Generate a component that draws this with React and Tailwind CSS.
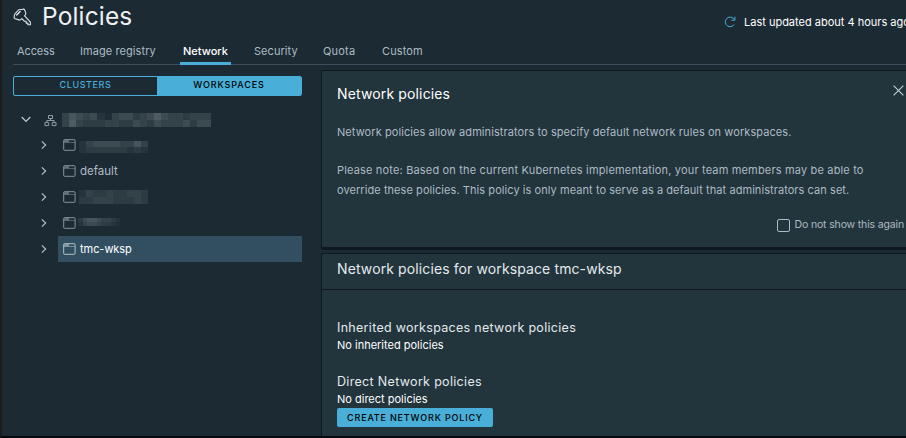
import React from "react";

const TABS = [
  { label: "Access", cls: "w-[37px] tracking-[-0.1px]" },
  { label: "Image registry", cls: "w-[77px] tracking-[0.08px]" },
  { label: "Network", cls: "w-[45px] tracking-[0px]", active: true },
  { label: "Security", cls: "w-[43px] tracking-[0.05px]" },
  { label: "Quota", cls: "w-[33px] tracking-[0.2px]" },
  { label: "Custom", cls: "w-[41px] tracking-[0.1px]" },
];

// Brightness levels of the redacted names, one string per tile row.
const ROOT_TILES = ["354341034423464332333", "363222332243243334244"];
const FIRST_TILES = ["1344443353", "1222222121"];
const SECOND_TILES = ["1322322332", "2233322232"];
const THIRD_TILES = ["245543321", "134432210"];

const LEVELS = [
  "bg-[#1f2d36]",
  "bg-[#26343d]",
  "bg-[#2d3b43]",
  "bg-[#34424a]",
  "bg-[#3d4a52]",
  "bg-[#47555c]",
  "bg-[#4f5b62]",
];

function Redacted({ tiles, size, className = "" }) {
  return (
    <div className={`flex flex-col ${className}`}>
      {tiles.map((row, i) => (
        <div key={i} className="flex">
          {row.split("").map((level, j) => (
            <span key={j} className={`block ${size} ${LEVELS[Number(level)]}`} />
          ))}
        </div>
      ))}
    </div>
  );
}

function KeyIcon() {
  return (
    <svg width="19" height="19" viewBox="0 0 19 19" fill="none" stroke="#dfe6ea" strokeWidth="1.1" strokeLinejoin="round" strokeLinecap="round">
      <path d="M6.1 1.8 9.9 1.2Q11.3 1 11.8 2.2L12.8 5.2Q13 6 12.4 6.7L11.6 7.8 17.4 14.2V16.8H14.9V15.1H13.2V13.3H11.5L8.9 10.6 7.6 11.6Q6.8 12.2 5.9 11.9L2.2 10.8Q1 10.3 1.1 9L1.5 6.9Q1.6 6.2 2.2 5.6L5 2.5Q5.4 1.9 6.1 1.8Z" />
      <path d="M3.7 7 7.1 3.4" strokeWidth="1.4" />
    </svg>
  );
}

function Chevron({ down }) {
  return down ? (
    <svg width="10" height="7" viewBox="0 0 10 7" fill="none" stroke="#b6c4cc" strokeWidth="1.3">
      <path d="M.7 1 5 5.4 9.3 1" />
    </svg>
  ) : (
    <svg width="7" height="10" viewBox="0 0 7 10" fill="none" stroke="#b6c4cc" strokeWidth="1.3">
      <path d="M1 .7 5.4 5 1 9.3" />
    </svg>
  );
}

function OrgIcon() {
  return (
    <svg width="13" height="13" viewBox="0 0 13 13" fill="none" stroke="#8d9ba3" strokeWidth="1">
      <path d="M4.5 1.5h4v3h-4zM.9 8.6h3.8v3H.9zM8.2 8.6H12v3H8.2zM6.5 4.5v2M2.8 8.6V6.5h7.3v2.1" />
    </svg>
  );
}

function WindowIcon({ bright }) {
  const c = bright ? "#b4c1c9" : "#87959d";
  return (
    <svg width="13" height="12" viewBox="0 0 13 12" fill="none" stroke={c}>
      <rect x=".7" y=".7" width="11.4" height="10.6" rx=".8" />
      <path d="M1 3.5h11" strokeWidth=".5" />
      <path d="M1.2 2.2H6" strokeWidth="2" opacity=".7" />
    </svg>
  );
}

function TreeRow({ children, selected }) {
  return (
    <div className="flex h-[26px] items-center">
      <div className="flex w-[45px] justify-end pl-7 pr-[11px]">
        <Chevron />
      </div>
      <div className={`flex h-[26px] grow items-center gap-[4px] pl-[5px] ${selected ? "bg-[#324f61]" : ""}`}>
        <WindowIcon bright={selected} />
        {children}
      </div>
    </div>
  );
}

export default function App() {
  return (
    <div className="h-[438px] w-[906px] overflow-hidden border-b-2 border-l-2 border-b-[#08090c] border-l-[#1c1b1c] bg-[#1c2a33] font-['Inter','Liberation_Sans',sans-serif] text-[#adbbc4]">
      <header className="flex h-[38px] items-start pl-[11px]">
        <div className="pt-2">
          <KeyIcon />
        </div>
        <h1 className="ml-[10px] mt-[1px] text-[24.5px] leading-[30px] tracking-[0.15px] text-[#edf1f4]">Policies</h1>
        <div className="ml-auto flex w-[182px] shrink-0 items-center gap-[8px] pt-[14px]">
          <svg className="shrink-0" width="12" height="12" viewBox="0 0 12 12" fill="none" stroke="#4aaed9" strokeWidth="1">
            <path d="M10.2 8.4A4.8 4.8 0 1 1 9.6 2.6L10.6 3.8" />
            <path d="M10.9.7V4.2H7.4" />
          </svg>
          <span className="whitespace-nowrap text-[11px] leading-4 text-white">Last updated about 4 hours ago</span>
        </div>
      </header>

      <nav className="ml-[11px] flex h-[27px] items-end gap-[20px] border-b border-[#3d4e5a] pl-px">
        {TABS.map((t) => (
          <div
            key={t.label}
            className={`-mb-px box-content whitespace-nowrap border-b-[3px] px-[3px] text-[11px] ${t.cls} h-[24px] leading-[26px] ${
              t.active ? "border-[#49afd9] font-medium text-white" : "border-transparent"
            }`}
          >
            {t.label}
          </div>
        ))}
      </nav>

      <div className="flex">
        <aside className="w-[319px] shrink-0 pl-[11px] pt-[11px]">
          <div className="flex h-5 w-[289px] overflow-hidden rounded-[2px] border border-[#49afd9] text-[9px] font-medium leading-[16px]">
            <div className="w-[143px] text-center tracking-[0.6px] text-[#49afd9]">CLUSTERS</div>
            <div className="grow bg-[#49afd9] text-center tracking-[0.9px] text-black">WORKSPACES</div>
          </div>
          <div className="mt-[10px] w-[289px]">
            <div className="flex h-[26px] items-center pl-2">
              <Chevron down />
              <div className="ml-[13px] mr-[5px] mt-0.5">
                <OrgIcon />
              </div>
              <Redacted tiles={ROOT_TILES} size="h-[7px] w-[7.1px]" className="mt-[2px]" />
            </div>
            <TreeRow>
              <Redacted tiles={FIRST_TILES} size="h-[6px] w-[6.9px]" className="-ml-px mt-[4px]" />
            </TreeRow>
            <TreeRow>
              <span className="text-[11.5px] leading-6">default</span>
            </TreeRow>
            <TreeRow>
              <Redacted tiles={SECOND_TILES} size="h-[7px] w-[6.9px]" className="-ml-px" />
            </TreeRow>
            <TreeRow>
              <Redacted tiles={THIRD_TILES} size="h-[4px] w-[4.7px]" className="-ml-[2px] -mt-[2px]" />
            </TreeRow>
            <TreeRow selected>
              <span className="text-[11px] leading-6 tracking-[-0.05px] text-white">tmc-wksp</span>
            </TreeRow>
          </div>
        </aside>

        <main className="flex h-[371px] min-w-0 grow flex-col gap-[3px] pt-[5px]">
          <section className="h-[180px] shrink-0 rounded-l-[2px] border-b-[3px] border-l border-t border-[#0f181e] bg-[#22343c] pl-[15px]">
            <div className="flex h-[46px] items-center justify-between pr-[2px]">
              <h2 className="text-[14px] leading-5 tracking-[0.14px] text-white">Network policies</h2>
              <svg className="mb-[8px]" width="11" height="11" viewBox="0 0 11 11" stroke="#c3d0d7" strokeWidth="1.1">
                <path d="M.6.6 10.4 10.4M10.4.6.6 10.4" />
              </svg>
            </div>
            <p className="mt-[5px] text-[11px] leading-5 tracking-[0.08px]">
              Network policies allow administrators to specify default network rules on workspaces.
            </p>
            <p className="mt-[18px] whitespace-nowrap text-[11px] leading-5">
              <span className="block tracking-[0.167px]">Please note: Based on the current Kubernetes implementation, your team members may be able to</span>
              <span className="block tracking-[0.065px]">override these policies. This policy is only meant to serve as a default that administrators can set.</span>
            </p>
            <label className="mt-[17px] flex items-center justify-end gap-[5px] pr-[2px] text-[10.5px] leading-4">
              <span className="h-[13px] w-[13px] rounded-[2px] border border-[#adbbc4]" />
              <span className="whitespace-nowrap tracking-[-0.15px]">Do not show this again</span>
            </label>
          </section>

          <section className="grow rounded-tl-[2px] border-l border-t border-[#0f181e] bg-[#22343c]">
            <h2 className="h-[36px] border-b border-[#0f181e] pl-[15px] text-[14px] leading-[30px] tracking-[0.11px] text-[#e4eaed]">
              Network policies for workspace tmc-wksp
            </h2>
            <div className="pl-[15px] pt-[28px]">
              <h3 className="text-[12.5px] leading-5 tracking-[0.3px] text-[#e4eaed]">Inherited workspaces network policies</h3>
              <p className="-mt-px text-[11px] leading-4 text-white">No inherited policies</p>
              <h3 className="mt-[19px] text-[12.5px] leading-5 tracking-[0.32px] text-[#e4eaed]">Direct Network policies</h3>
              <p className="-mt-px text-[11px] leading-4 text-white">No direct policies</p>
              <button className="mt-px block h-[19px] w-[156px] rounded-[2px] bg-[#49afd9] text-center text-[9px] font-medium leading-[18px] tracking-[0.82px] text-black">
                CREATE NETWORK POLICY
              </button>
            </div>
          </section>
        </main>
      </div>
    </div>
  );
}
